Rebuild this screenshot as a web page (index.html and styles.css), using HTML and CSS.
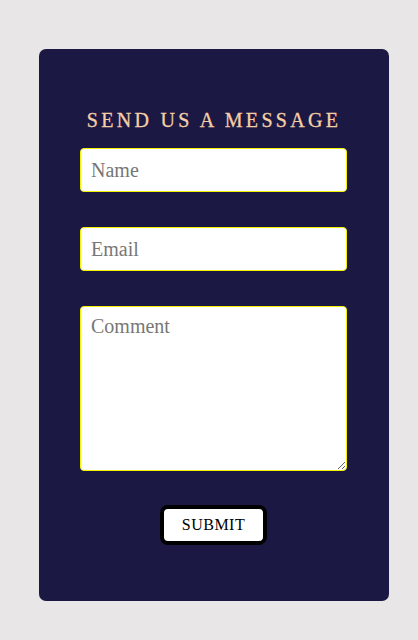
FILE: index.html
```html
<!DOCTYPE html>
<html>
<head>
<meta charset="utf-8">
<link rel="stylesheet" href="styles.css">
</head>
<body>
<div class="card">
  <h2 class="title">Send us a message</h2>
  <form class="form">
    <input class="field" type="text" placeholder="Name">
    <input class="field" type="text" placeholder="Email">
    <textarea class="field area" placeholder="Comment"></textarea>
    <button class="submit" type="button">SUBMIT</button>
  </form>
</div>
</body>
</html>
```
FILE: styles.css
```css
html, body {
  margin: 0;
  padding: 0;
  background: #e8e6e6;
}
body {
  padding: 49px 0 0 39px;
  font-family: "Liberation Serif", "DejaVu Serif", serif;
}
.card {
  box-sizing: border-box;
  width: 350px;
  height: 552px;
  background: #1b1843;
  border-radius: 7px;
  padding: 59px 42px 0 41px;
}
.title {
  margin: 0 0 16px;
  font-weight: normal;
  font-size: 20px;
  line-height: 24px;
  letter-spacing: 3.3px;
  text-indent: 1px;
  text-transform: uppercase;
  text-align: center;
  color: #f6cfa6;
  -webkit-text-stroke: 0.3px #f6cfa6;
}
.form {
  display: flex;
  flex-direction: column;
  align-items: center;
  gap: 35px;
}
.field {
  box-sizing: border-box;
  display: block;
  width: 267px;
  height: 44px;
  margin: 0;
  border: 1px solid #f2f200;
  border-radius: 4px;
  background: #fff;
  padding: 0 10px;
  font-family: "Liberation Serif", "DejaVu Serif", serif;
  font-size: 20px;
  color: #333;
  outline: none;
}
.field::placeholder {
  color: #777;
}
.area {
  height: 165px;
  padding: 8px 10px;
  resize: vertical;
}
.submit {
  margin-top: -1px;
  box-sizing: border-box;
  width: 107px;
  height: 40px;
  border: 4px solid #000;
  border-radius: 8px;
  background: #fff;
  color: #000;
  font-family: "Liberation Serif", "DejaVu Serif", serif;
  font-size: 16px;
  letter-spacing: 0.5px;
  padding: 0;
}
```
